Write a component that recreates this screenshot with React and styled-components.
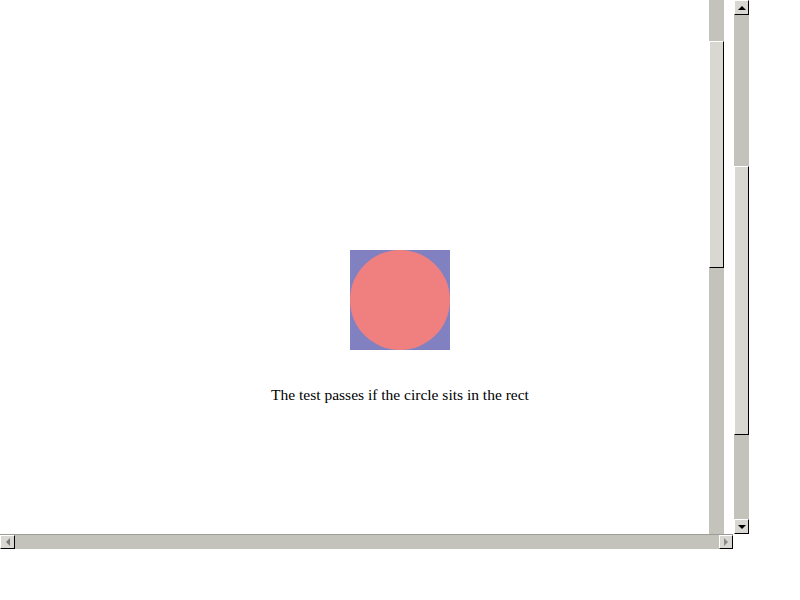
import React from "react";
import styled, { createGlobalStyle } from "styled-components";

const Global = createGlobalStyle`
  html, body { margin: 0; padding: 0; background: #ffffff; }
  body { font-family: "Liberation Serif", "Times New Roman", serif; }
`;

const TRACK = "#c3c2bb";
const FACE = "#d8d7d1";

const Frame = styled.div`
  display: flex;
  width: 749px;
  height: 549px;
`;

const MainCol = styled.div`
  display: flex;
  flex-direction: column;
  width: 734px;
`;

const Viewport = styled.div`
  display: flex;
  height: 534px;
`;

const Content = styled.div`
  width: 709px;
  box-sizing: border-box;
  padding: 250px 0 0 91px;
  display: flex;
  flex-direction: column;
  align-items: center;
`;

const Caption = styled.p`
  margin: 36px 0 0;
  font-size: 15.5px;
  line-height: 18px;
  color: #000;
  white-space: nowrap;
`;

const VTrack = styled.div`
  width: 15px;
  height: ${(p) => p.$h}px;
  background: ${TRACK};
  display: flex;
  flex-direction: column;
  flex-shrink: 0;
  box-sizing: border-box;
`;

const Spacer = styled.div`
  height: ${(p) => p.$h}px;
  flex-shrink: 0;
`;

const Thumb = styled.div`
  height: ${(p) => p.$h}px;
  flex-shrink: 0;
  background: ${FACE};
  box-sizing: border-box;
  border-top: 1px solid #ffffff;
  border-left: 1px solid #ffffff;
  border-right: 1px solid #000000;
  border-bottom: 1px solid #000000;
`;

const Btn = styled.div`
  width: 15px;
  height: 15px;
  flex-shrink: 0;
  box-sizing: border-box;
  background: ${FACE};
  border-top: 1px solid #ffffff;
  border-left: 1px solid #ffffff;
  border-right: 1px solid #000000;
  border-bottom: 1px solid #000000;
  display: flex;
  align-items: center;
  justify-content: center;
`;

const Gap = styled.div`
  width: 10px;
`;

const HTrack = styled.div`
  width: 733px;
  height: 15px;
  background: ${TRACK};
  border-top: 1px solid #9d9c96;
  box-sizing: border-box;
  display: flex;
  justify-content: space-between;
`;

const HBtn = styled(Btn)`
  height: 14px;
  width: ${(p) => p.$w || 15}px;
`;

const Arrow = ({ dir, color = "#000" }) => {
  const pts = {
    up: "0,5 4,1 8,5",
    down: "0,1 4,5 8,1",
    left: "5,0 1,4 5,8",
    right: "1,0 5,4 1,8",
  }[dir];
  const vert = dir === "up" || dir === "down";
  const w = vert ? 8 : 6;
  const h = vert ? 6 : 8;
  return (
    <svg width={w} height={h} viewBox={`0 0 ${w} ${h}`}>
      <polygon points={pts} fill={color} />
    </svg>
  );
};

const SideCol = styled.div`
  width: 15px;
`;

export default function App() {
  return (
    <>
      <Global />
      <Frame>
        <MainCol>
          <Viewport>
            <Content>
              <svg width="100" height="100" viewBox="0 0 100 100">
                <rect width="100" height="100" fill="#8181c1" />
                <circle cx="50" cy="50" r="50" fill="#f08080" />
              </svg>
              <Caption>The test passes if the circle sits in the rect</Caption>
            </Content>
            <VTrack $h={534}>
              <Spacer $h={41} />
              <Thumb $h={227} />
            </VTrack>
            <Gap />
          </Viewport>
          <HTrack>
            <HBtn>
              <Arrow dir="left" color="#7a7a7a" />
            </HBtn>
            <HBtn $w={14}>
              <Arrow dir="right" color="#8a8a8a" />
            </HBtn>
          </HTrack>
        </MainCol>
        <SideCol>
          <VTrack $h={534}>
            <Btn>
              <Arrow dir="up" />
            </Btn>
            <Spacer $h={151} />
            <Thumb $h={269} />
            <Spacer $h={84} />
            <Btn>
              <Arrow dir="down" />
            </Btn>
          </VTrack>
        </SideCol>
      </Frame>
    </>
  );
}
